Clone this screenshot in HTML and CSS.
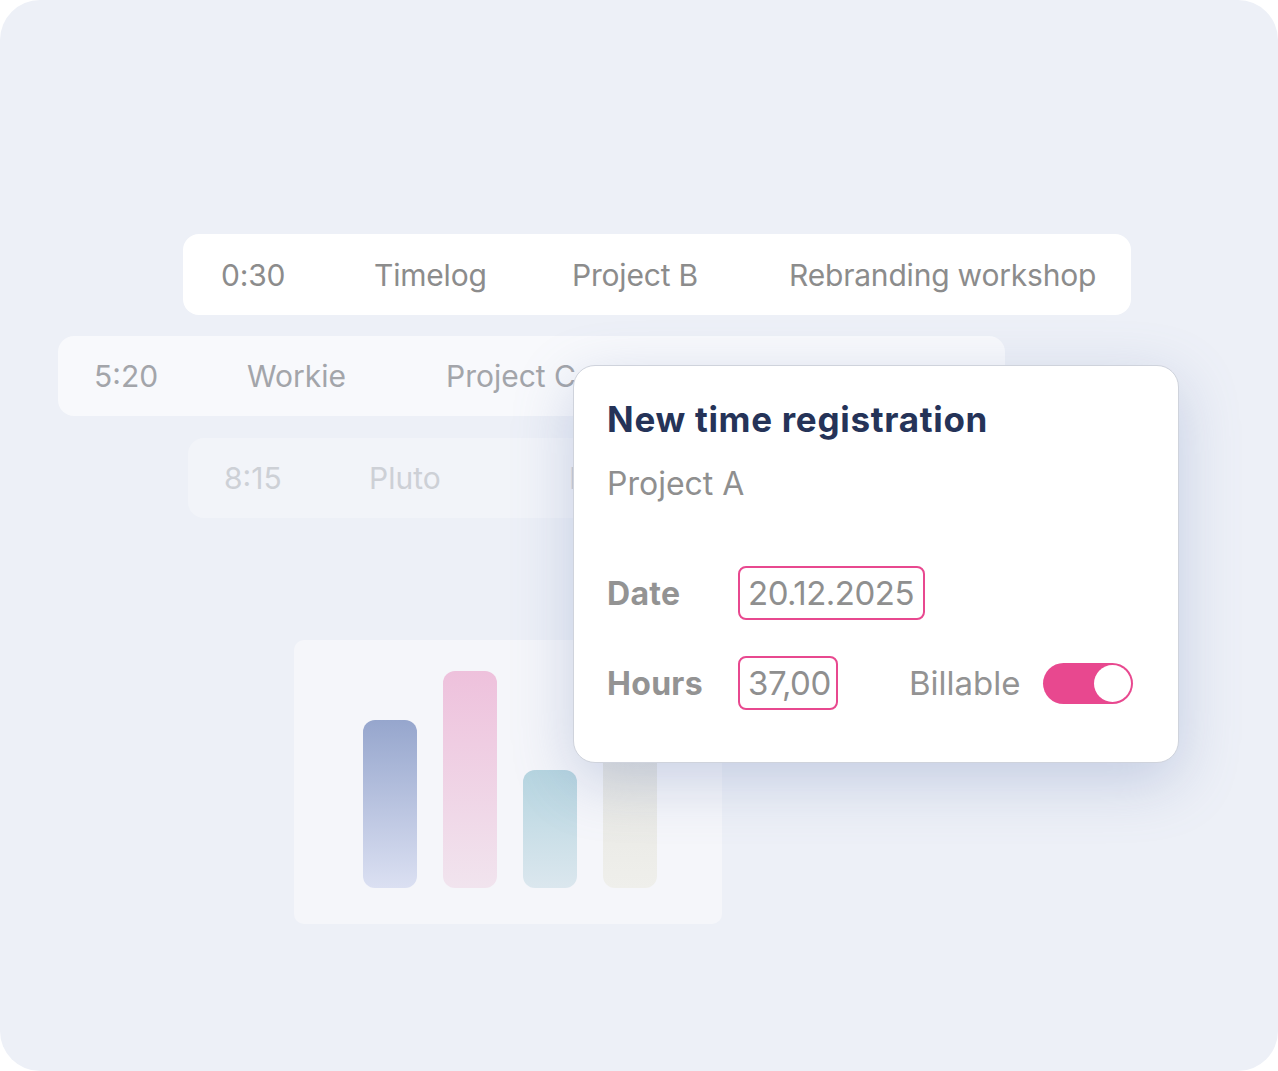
FILE: index.html
```html
<!DOCTYPE html>
<html lang="en">
<head>
<meta charset="utf-8">
<title>New time registration</title>
<link rel="stylesheet" href="styles.css">
</head>
<body>
<main class="canvas">
  <div class="row row-1">
    <span class="cell c1">0:30</span>
    <span class="cell c2">Timelog</span>
    <span class="cell c3">Project B</span>
    <span class="cell">Rebranding workshop</span>
  </div>
  <div class="row row-2">
    <span class="cell c1">5:20</span>
    <span class="cell c2b">Workie</span>
    <span class="cell">Project C</span>
  </div>
  <div class="row row-3">
    <span class="cell c1c">8:15</span>
    <span class="cell c2c">Pluto</span>
    <span class="cell">Project D</span>
  </div>

  <div class="chart">
    <div class="bar bar-blue"></div>
    <div class="bar bar-pink"></div>
    <div class="bar bar-teal"></div>
    <div class="bar bar-sand"></div>
  </div>

  <section class="dialog">
    <h1 class="dialog-title">New time registration</h1>
    <p class="dialog-project">Project A</p>
    <div class="form">
      <div class="form-row">
        <span class="label">Date</span>
        <span class="field field-date">20.12.2025</span>
      </div>
      <div class="form-row">
        <span class="label">Hours</span>
        <span class="field field-hours">37,00</span>
        <span class="billable">Billable</span>
        <span class="toggle"><span class="knob"></span></span>
      </div>
    </div>
  </section>
</main>
</body>
</html>
```

FILE: styles.css
```css
* { box-sizing: border-box; }
html, body { margin: 0; padding: 0; background: #ffffff; }
body { font-family: Inter, "Noto Sans", "Liberation Sans", sans-serif; }

.canvas {
  position: relative;
  width: 1278px;
  height: 1071px;
  background: #edf0f7;
  border-radius: 40px;
  overflow: hidden;
}

.row {
  position: absolute;
  display: flex;
  align-items: center;
  height: 81px;
  border-radius: 16px;
  font-size: 30px;
  white-space: nowrap;
}
.row-1 { left: 183px; top: 234px; width: 948px; background: #ffffff; color: #8c8c8c; padding-left: 38px; letter-spacing: -0.2px; }
.row-2 { left: 58px; top: 336px; width: 947px; height: 80px; background: #f8f9fc; color: #a3a5aa; padding-left: 36px; }
.row-3 { left: 188px; top: 438px; width: 947px; height: 80px; background: #f2f4f9; color: #cdd0d6; padding-left: 36px; }

.cell { display: block; }
.c1 { width: 153px; }
.c2 { width: 198px; }
.c3 { width: 217px; }
.c2b { width: 199px; }
.c1c { width: 145px; }
.c2c { width: 200px; }

.chart {
  position: absolute;
  left: 294px;
  top: 640px;
  width: 428px;
  height: 284px;
  background: #f5f6fa;
  border-radius: 10px;
  display: flex;
  align-items: flex-end;
  gap: 26px;
  padding: 0 0 36px 69px;
}
.bar { width: 54px; border-radius: 12px; }
.bar-blue { height: 168px; background: linear-gradient(#96a6cd, #dbe0f2); }
.bar-pink { height: 217px; background: linear-gradient(#eec1dc, #f1e4ee); }
.bar-teal { height: 118px; background: linear-gradient(#b6d5e0, #dbe7ee); }
.bar-sand { height: 160px; background: linear-gradient(#e4e4e0, #efefeb); }

.dialog {
  position: absolute;
  left: 573px;
  top: 365px;
  width: 606px;
  height: 398px;
  background: #ffffff;
  border: 1px solid #cfd3dc;
  border-radius: 22px;
  box-shadow: 0 18px 60px rgba(110, 130, 185, 0.32);
  padding: 32px 0 0 33px;
}
.dialog-title {
  margin: 0;
  font-size: 35px;
  line-height: 42px;
  font-weight: 700;
  color: #253358;
  letter-spacing: 0.7px;
}
.dialog-project {
  margin: 25px 0 0;
  font-size: 32px;
  line-height: 38px;
  color: #8f8f8f;
}
.form {
  margin-top: 63px;
  display: flex;
  flex-direction: column;
  gap: 36px;
}
.form-row {
  display: flex;
  align-items: center;
  height: 54px;
}
.label {
  width: 131px;
  font-size: 32px;
  font-weight: 700;
  color: #939393;
  letter-spacing: 0.3px;
}
.field {
  height: 54px;
  border: 2px solid #e8488f;
  border-radius: 8px;
  display: flex;
  align-items: center;
  padding: 0 4px 0 8px;
  font-size: 33px;
  color: #8f8f8f;
  letter-spacing: -0.5px;
  white-space: nowrap;
}
.field-date { width: 187px; }
.field-hours { width: 100px; }
.billable {
  margin-left: 71px;
  font-size: 33px;
  color: #939393;
}
.toggle {
  margin-left: 22px;
  width: 90px;
  height: 41px;
  border-radius: 21px;
  background: #e8488f;
  display: flex;
  align-items: center;
  justify-content: flex-end;
  padding-right: 2px;
}
.knob {
  width: 37px;
  height: 37px;
  border-radius: 50%;
  background: #ffffff;
}
```
